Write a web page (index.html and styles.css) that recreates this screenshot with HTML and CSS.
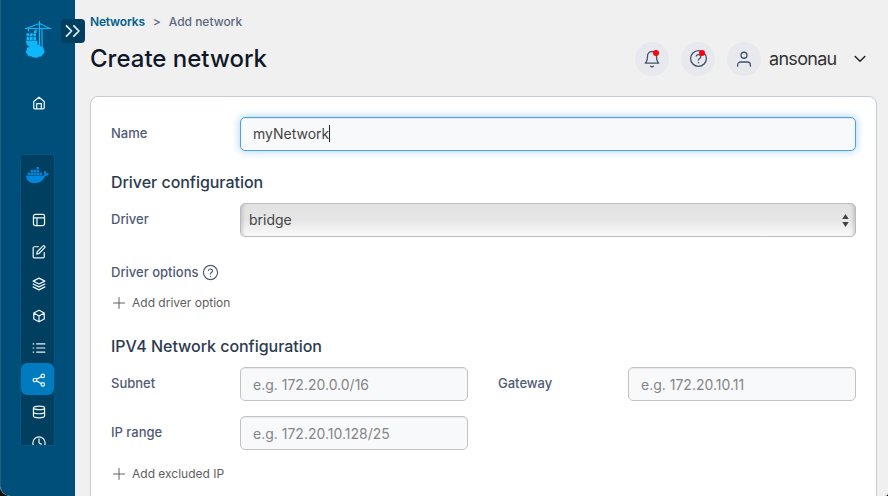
FILE: index.html
```html
<!DOCTYPE html>
<html lang="en">
<head>
<meta charset="utf-8">
<title>Create network</title>
<link rel="stylesheet" href="styles.css">
</head>
<body>
<div class="app">
  <aside class="sidebar">
    <svg class="logo" viewBox="0 0 27 38">
      <g fill="none" stroke-width="1.100">
        <path d="M.5 7.500H26M2 7.200 14.500 2.500 24.500 7.200" />
        <path d="M14.500.5V26M17 7V26" stroke-width="1.200"/>
        <path d="M3.500 8V10M11 8v3"/>
      </g>
      <g stroke="none">
        <path d="M1.500 12.300h2.800v3H1.500zM4.900 12.300h2.800v3H4.900zM8.300 12.300h2.800v3H8.300zM9 9.500h2.500V12H9zM1.500 15.900h2.800v3H1.500zM4.900 15.900h2.800v3H4.900zM8.300 15.900h2.800v3H8.300z"/>
        <path d="M1 19.400h10.500l1.300 1.200c-.2 2-.8 3.400-2.300 4.600H3.500C1.600 24.200 1 22 1 19.400z"/>
        <path d="M4 26c.8-2.200 3.300-2.700 5-1.400 1.500-2 5.100-1.600 6 .8 2.600-.6 4.300 1.400 3.800 3.400 1.300 1.600.7 3.900-1.100 4.500-.3 1.900-2.200 2.800-3.800 2.100-1.100 1.500-3.200 1.900-4.900.8-1.200.4-2.300 0-2.900-.9-1.800.6-3.700-.4-3.800-2.200C.8 32.400.4 30.400 1.700 29 1.300 27.500 2.300 26 4 26z"/>
      </g>
    </svg>
    <div class="toggle">
      <svg viewBox="0 0 24 24" width="24" height="24"><path d="m5.500 6.800 5 5.200-5 5.200M12.900 6.800l5 5.200-5 5.200" stroke-width="1.800"/></svg>
    </div>
    <a class="home"><svg class="icon" viewBox="0 0 24 24"><path d="M3 9.500 12 2l9 7.500V20a2 2 0 0 1-2 2H5a2 2 0 0 1-2-2zM8 22v-9h8v9"/></svg></a>
    <nav class="menu">
      <div class="docker">
        <svg viewBox="0 0 24 18" width="23" height="17"><path d="M11 0h2.700v2.500H11zM4.700 3h2.700v2.500H4.700zM7.850 3h2.700v2.500h-2.700zM11 3h2.700v2.500H11zM1.600 6h2.700v2.400H1.600zM4.700 6h2.700v2.400H4.700zM7.850 6h2.700v2.400h-2.700zM11 6h2.700v2.400H11zM14.150 6h2.700v2.400h-2.700z"/><path d="M0 9h17.500c1.300-.1 1.900-.5 2-.8-1-1.500-.8-3.300.1-4.400 1.200.8 1.700 1.900 1.800 2.900 1-.2 2-.1 2.600.4-.6 1.600-2 2.400-3.900 2.300C18.100 14.500 14.300 17 8.700 17 3.100 17 .1 14.200 0 9z"/></svg>
      </div>
      <a class="item"><svg class="icon" viewBox="0 0 24 24"><rect x="2.500" y="2.500" width="19" height="19" rx="3"/><path d="M2.500 8.500h19M8.500 8.500v13"/></svg></a>
      <a class="item"><svg class="icon" viewBox="0 0 24 24"><path d="M11 3H4a2 2 0 0 0-2 2v15a2 2 0 0 0 2 2h15a2 2 0 0 0 2-2v-7M18.500 2a2.120 2.120 0 0 1 3 3L12 14.500l-4 1 1-4z"/></svg></a>
      <a class="item"><svg class="icon" viewBox="0 0 24 24"><path d="m12 2 10 5-10 5L2 7zM2 12l10 5 10-5M2 17l10 5 10-5"/></svg></a>
      <a class="item"><svg class="icon" viewBox="0 0 24 24"><path d="m12 2 9 5v10l-9 5-9-5V7zM3 7l9 5 9-5M12 12v10"/></svg></a>
      <a class="item"><svg class="icon" viewBox="0 0 24 24"><path d="M8 5h14M8 12h14M8 19h14M2 5h1M2 12h1M2 19h1"/></svg></a>
      <a class="item active"><svg class="icon" viewBox="0 0 24 24"><circle cx="18.500" cy="5" r="3"/><circle cx="5" cy="12" r="3"/><circle cx="18.500" cy="19.500" r="3"/><path d="m7.700 13.500 8 4.500M15.800 6.500l-8 4"/></svg></a>
      <a class="item"><svg class="icon" viewBox="0 0 24 24"><ellipse cx="12" cy="5" rx="9.500" ry="3"/><path d="M2.500 5v14c0 4 19 4 19 0V5M2.500 12c0 4 19 4 19 0"/></svg></a>
      <a class="item"><svg class="icon" viewBox="0 0 24 24"><circle cx="12" cy="12" r="10.500"/><path d="M12 5v7l4 2"/></svg></a>
    </nav>
  </aside>

  <main class="main">
    <div class="crumbs"><a>Networks</a><span class="sep">&gt;</span><span>Add network</span></div>
    <header class="header">
      <h1>Create network</h1>
      <div class="tools">
        <div class="round"><svg viewBox="0 0 24 24" width="18" height="18"><path d="M18 8A6 6 0 0 0 6 8c0 7-3 9.500-3 9.500h18S18 15 18 8M10 21.500c1 1 3 1 4 0"/></svg><i class="dot"></i></div>
        <div class="round"><svg viewBox="0 0 24 24" width="19" height="19"><circle cx="12" cy="12" r="10"/><path d="M9.100 9a3 3 0 0 1 5.800 1c0 2-3 2-3 4M12 17.300v.2"/></svg><i class="dot"></i></div>
        <div class="round"><svg viewBox="0 0 24 24" width="18" height="18"><circle cx="12" cy="7" r="4"/><path d="M3.500 21.500V20a4 4 0 0 1 4-4h9a4 4 0 0 1 4 4v1.500"/></svg></div>
        <span class="user">ansonau</span>
        <svg class="chevron" viewBox="0 0 12 8" width="12" height="8"><path d="m1.200 1.500 4.800 4.800 4.800-4.800" stroke-width="1.500"/></svg>
      </div>
    </header>

    <section class="card">
      <div class="row"><label>Name</label><div class="input focus">myNetwork<i class="caret"></i></div></div>
      <h2 class="driver-title">Driver configuration</h2>
      <div class="row driver-row"><label>Driver</label><div class="select"><span>bridge</span><svg viewBox="0 0 7 13" width="7" height="13"><path d="M3.500 0 6.700 5H.3zM3.500 13 .3 8h6.400z"/></svg></div></div>
      <div class="options"><label>Driver options</label><svg viewBox="0 0 24 24" width="17" height="17"><circle cx="12" cy="12" r="10"/><path d="M9.100 9a3 3 0 0 1 5.800 1c0 2-3 2-3 4M12 17.300v.2"/></svg></div>
      <div class="add add-option"><svg viewBox="0 0 12 12" width="12" height="12"><path d="M6 .5v11M.5 6h11"/></svg><span>Add driver option</span></div>
      <h2 class="ip-title">IPV4 Network configuration</h2>
      <div class="row pair"><label>Subnet</label><div class="input hint">e.g. 172.20.0.0/16</div><label>Gateway</label><div class="input hint">e.g. 172.20.10.11</div></div>
      <div class="row pair range"><label>IP range</label><div class="input hint">e.g. 172.20.10.128/25</div></div>
      <div class="add add-ip"><svg viewBox="0 0 12 12" width="12" height="12"><path d="M6 .5v11M.5 6h11"/></svg><span>Add excluded IP</span></div>
    </section>
  </main>
</div>
</body>
</html>
```
FILE: styles.css
```css
* { box-sizing: border-box; }
html, body { margin: 0; height: 100%; overflow: hidden; background: #111; }
body { font-family: Inter, "Liberation Sans", sans-serif; }
svg { display: block; fill: none; stroke: currentColor; stroke-linecap: round; stroke-linejoin: round; stroke-width: 1.7; flex: none; }
.app { display: flex; height: 496px; background: #f0f0f0; border-radius: 0 0 3px 10px; overflow: hidden; }

.sidebar { position: relative; flex: none; width: 75px; background: #004f7a; border-left: 1px solid #245f82; color: #f0f6fa; border-bottom-left-radius: 10px; }
.logo { width: 27px; height: 38px; margin: 21px 0 0 24px; fill: #0db7f9; stroke: #0db7f9; }
.toggle { position: absolute; left: 60px; top: 19px; width: 24px; height: 24px; border-radius: 4px; background: #003f60; color: #e1eef6; }
.home { display: flex; justify-content: center; margin: 37px 0 0 2px; }
.icon { width: 14px; height: 14px; stroke-width: 2.1; }
.menu { width: 33px; height: 290px; margin: 45px 0 0 20px; background: #003f5f; border-radius: 3px 3px 0 0; overflow: hidden; outline: 1px dotted #075b88; }
.docker { height: 49px; padding: 12px 0 0 5px; }
.docker svg { fill: #0086dc; stroke: none; }
.item { display: flex; align-items: center; justify-content: center; height: 32px; padding-left: 3px; }
.active { background: #007bc0; border-radius: 6px; height: 32px; margin-top: -1px; padding-top: 2px; }
.active + .item { padding-top: 1px; }

.main { flex: 1; min-width: 0; padding: 0 11px 0 15px; }
.crumbs { display: flex; height: 16px; margin-top: 14px; font-size: 12px; line-height: 16px; font-weight: 500; color: #5d6780; letter-spacing: -.02px; }
.crumbs a { color: #00608f; font-weight: 600; letter-spacing: -.18px; }
.sep { margin: 0 8px; }
.header { display: flex; align-items: center; justify-content: space-between; height: 34px; margin-top: 12px; }
h1 { margin: 0; font-size: 24px; line-height: 32px; font-weight: 500; color: #101828; }
.tools { display: flex; align-items: center; padding-right: 11px; margin-top: -1px; color: #344054; }
.round { position: relative; display: flex; align-items: center; justify-content: center; width: 34px; height: 34px; margin-right: 12px; border-radius: 50%; background: #e7e9ee; color: #43536a; }
.dot { position: absolute; left: 18px; top: 8px; width: 6px; height: 6px; border-radius: 50%; background: #ff0012; }
.user { width: 85px; margin-left: -4px; font-size: 18px; line-height: 24px; letter-spacing: -.7px; color: #333; }
.chevron { color: #222; }

.card { height: 420px; margin-top: 20px; padding: 20px; background: #fff; border: 1px solid #c5cbdb; border-radius: 8px; }
label { font-size: 13px; line-height: 16px; font-weight: 500; color: #4f5b75; }
.row { display: grid; grid-template-columns: 129px 616px; align-items: center; height: 34px; }
.row label { margin-top: -2px; }
.pair { grid-template-columns: 129px 228px 160px 228px; }
.pair label:nth-of-type(2) { padding-left: 30px; }
.input { display: flex; align-items: center; height: 34px; padding: 0 12px; font-size: 14px; color: #444; background: #f8f9fb; border: 1px solid #c3c3c3; border-radius: 5px; box-shadow: inset 0 1px 1px #0001; }
.focus { padding-bottom: 2px; border-color: #4aa3e8; box-shadow: inset 0 1px 1px #0001, 0 0 8px #66afe999; }
.caret { width: 1px; height: 17px; background: #222; }
.hint { color: #858585; padding-top: 1px; }
h2 { margin: 0; font-size: 16px; line-height: 20px; font-weight: 500; letter-spacing: -.04px; color: #2b3b50; }
.driver-title { margin-top: 21px; }
.driver-row { margin-top: 11px; }
.select { display: flex; align-items: center; justify-content: space-between; height: 34px; padding: 0 6px 0 8px; font-size: 14px; color: #444; border: 1px solid #bcbcbc; border-radius: 5px; background: linear-gradient(#e2e2e2, #e6e6e6 50%, #f0f0f1 75%, #fafafa); box-shadow: inset 5px 0 4px -4px #0003, inset -5px 0 4px -4px #0003; }
.select span { padding-bottom: 2px; }
.select svg { fill: #444; stroke: none; }
.options { display: flex; align-items: center; gap: 4px; height: 20px; margin-top: 25px; color: #4f5d76; }
.add { display: flex; align-items: center; gap: 7px; height: 16px; padding-left: 2px; font-size: 12px; line-height: 16px; color: #606060; }
.add svg { stroke-width: 1; }
.add-option { margin-top: 13px; }
.ip-title { margin-top: 25px; }
.ip-title + .row { margin-top: 11px; }
.range { margin-top: 15px; }
.add-ip { margin-top: 16px; }
```
